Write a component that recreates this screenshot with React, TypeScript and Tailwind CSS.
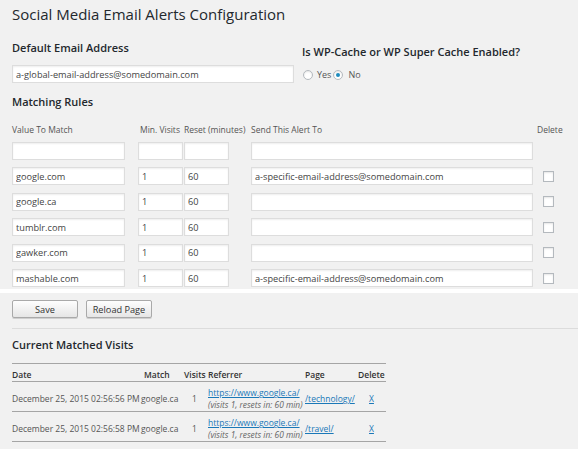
import React from 'react';

type Rule = { value: string; min: string; reset: string; sendTo: string; del: boolean };

const rules: Rule[] = [
  { value: '', min: '', reset: '', sendTo: '', del: false },
  { value: 'google.com', min: '1', reset: '60', sendTo: 'a-specific-email-address@somedomain.com', del: true },
  { value: 'google.ca', min: '1', reset: '60', sendTo: '', del: true },
  { value: 'tumblr.com', min: '1', reset: '60', sendTo: '', del: true },
  { value: 'gawker.com', min: '1', reset: '60', sendTo: '', del: true },
  { value: 'mashable.com', min: '1', reset: '60', sendTo: 'a-specific-email-address@somedomain.com', del: true },
];

const visits = [
  { date: 'December 25, 2015 02:56:56 PM', match: 'google.ca', count: '1', page: '/technology/' },
  { date: 'December 25, 2015 02:56:58 PM', match: 'google.ca', count: '1', page: '/travel/' },
];

const inputCls =
  'h-[18px] border border-[#dddddd] bg-white px-[3px] text-[9.2px] text-[#444] shadow-[inset_0_1px_2px_rgba(0,0,0,0.07)] outline-none';

const Field = ({ value, width }: { value: string; width: string }) => (
  <input readOnly defaultValue={value} className={`${inputCls} ${width}`} />
);

const Radio = ({ checked }: { checked?: boolean }) => (
  <span className="flex h-[10px] w-[10px] items-center justify-center rounded-full border border-[#b4b9be] bg-white shadow-[inset_0_1px_2px_rgba(0,0,0,0.1)]">
    {checked && <span className="h-[4px] w-[4px] rounded-full bg-[#1e8cbe]" />}
  </span>
);

const Button = ({ label }: { label: string }) => (
  <button className="h-[18px] w-[66px] rounded-[2px] border border-[#a9a9a9] bg-gradient-to-b from-[#fefefe] to-[#e6e6e6] text-[9.2px] leading-none text-[#333] shadow-[0_1px_0_#cfcfcf]">
    {label}
  </button>
);

const App = () => {
  return (
    <div className="min-h-screen bg-[#f1f1f1] px-3 pt-1 font-['Open_Sans',sans-serif] text-[#444]">
      <h1 className="text-[15px] leading-[20px] font-normal text-[#23282d]">
        Social Media Email Alerts Configuration
      </h1>

      <div className="mt-[17px] flex">
        <div className="w-[282px]">
          <h2 className="text-[11px] leading-[14px] font-semibold text-[#23282d]">Default Email Address</h2>
          <Field value="a-global-email-address@somedomain.com" width="mt-[10px] w-[282px]" />
        </div>
        <div className="ml-[8px]">
          <h2 className="pt-[4px] text-[11px] leading-[14px] font-semibold text-[#23282d]">
            Is WP-Cache or WP Super Cache Enabled?
          </h2>
          <div className="mt-[10px] ml-px flex items-center text-[9px] leading-[12px] text-[#555]">
            <Radio />
            <span className="ml-[4px]">Yes</span>
            <span className="ml-[2px]">
              <Radio checked />
            </span>
            <span className="ml-[5px]">No</span>
          </div>
        </div>
      </div>

      <h2 className="mt-[11px] text-[11px] leading-[14px] font-semibold text-[#23282d]">Matching Rules</h2>

      <div className="mt-[15px] flex whitespace-nowrap text-[8.5px] leading-[12px] text-[#555]">
        <div className="w-[113px]">Value To Match</div>
        <div className="ml-[13px] w-[45px] pl-[2px]">Min. Visits</div>
        <div className="ml-px w-[45px]">Reset (minutes)</div>
        <div className="ml-[22px] w-[282px]">Send This Alert To</div>
        <div className="ml-[4px]">Delete</div>
      </div>

      <div className="mt-[6px] flex flex-col gap-y-[7.6px]">
        {rules.map((r, i) => (
          <div key={i} className="flex items-center">
            <Field value={r.value} width="w-[113px]" />
            <Field value={r.min} width="ml-[13px] w-[45px]" />
            <Field value={r.reset} width="ml-px w-[45px]" />
            <Field value={r.sendTo} width="ml-[22px] w-[282px]" />
            {r.del && (
              <span className="ml-[10px] h-[11px] w-[11px] border border-[#b4b9be] bg-white shadow-[inset_0_1px_2px_rgba(0,0,0,0.1)]" />
            )}
          </div>
        ))}
      </div>

      <div className="-mx-3 mt-[2px] h-[4px] bg-white" />

      <div className="mt-[7px] flex gap-[8px]">
        <Button label="Save" />
        <Button label="Reload Page" />
      </div>

      <div className="-mr-3 mt-[10px] border-t border-[#dcdcdc]" />

      <h2 className="mt-[9px] text-[11px] leading-[14px] font-semibold text-[#23282d]">Current Matched Visits</h2>

      <div className="mt-[11px] w-[374px] border-t border-[#a5a5a5] text-[8.5px] whitespace-nowrap">
        <div className="grid h-[18px] grid-cols-[129px_40px_27px_97px_52px_29px] border-b border-[#a5a5a5] pt-[5px] leading-[11px] font-semibold text-[#333]">
          <div>Date</div>
          <div className="pl-[3px]">Match</div>
          <div className="pl-[3px]">Visits</div>
          <div>Referrer</div>
          <div>Page</div>
          <div className="pl-px">Delete</div>
        </div>
        {visits.map((v, i) => (
          <div
            key={i}
            className="grid h-[30px] grid-cols-[129px_40px_27px_97px_52px_29px] items-center border-b border-[#a5a5a5] pt-[5px] leading-[12px] text-[#555]"
          >
            <div>{v.date}</div>
            <div>{v.match}</div>
            <div className="text-center">{v.count}</div>
            <div className="flex flex-col">
              <a className="text-[#1a78b8] underline">https://www.google.ca/</a>
              <span className="text-[8.4px] italic text-[#666]">(visits 1, resets in: 60 min)</span>
            </div>
            <div>
              <a className="text-[#1a78b8] underline">{v.page}</a>
            </div>
            <div className="text-center">
              <a className="text-[#1a78b8] underline">X</a>
            </div>
          </div>
        ))}
      </div>
    </div>
  );
};

export default App;
